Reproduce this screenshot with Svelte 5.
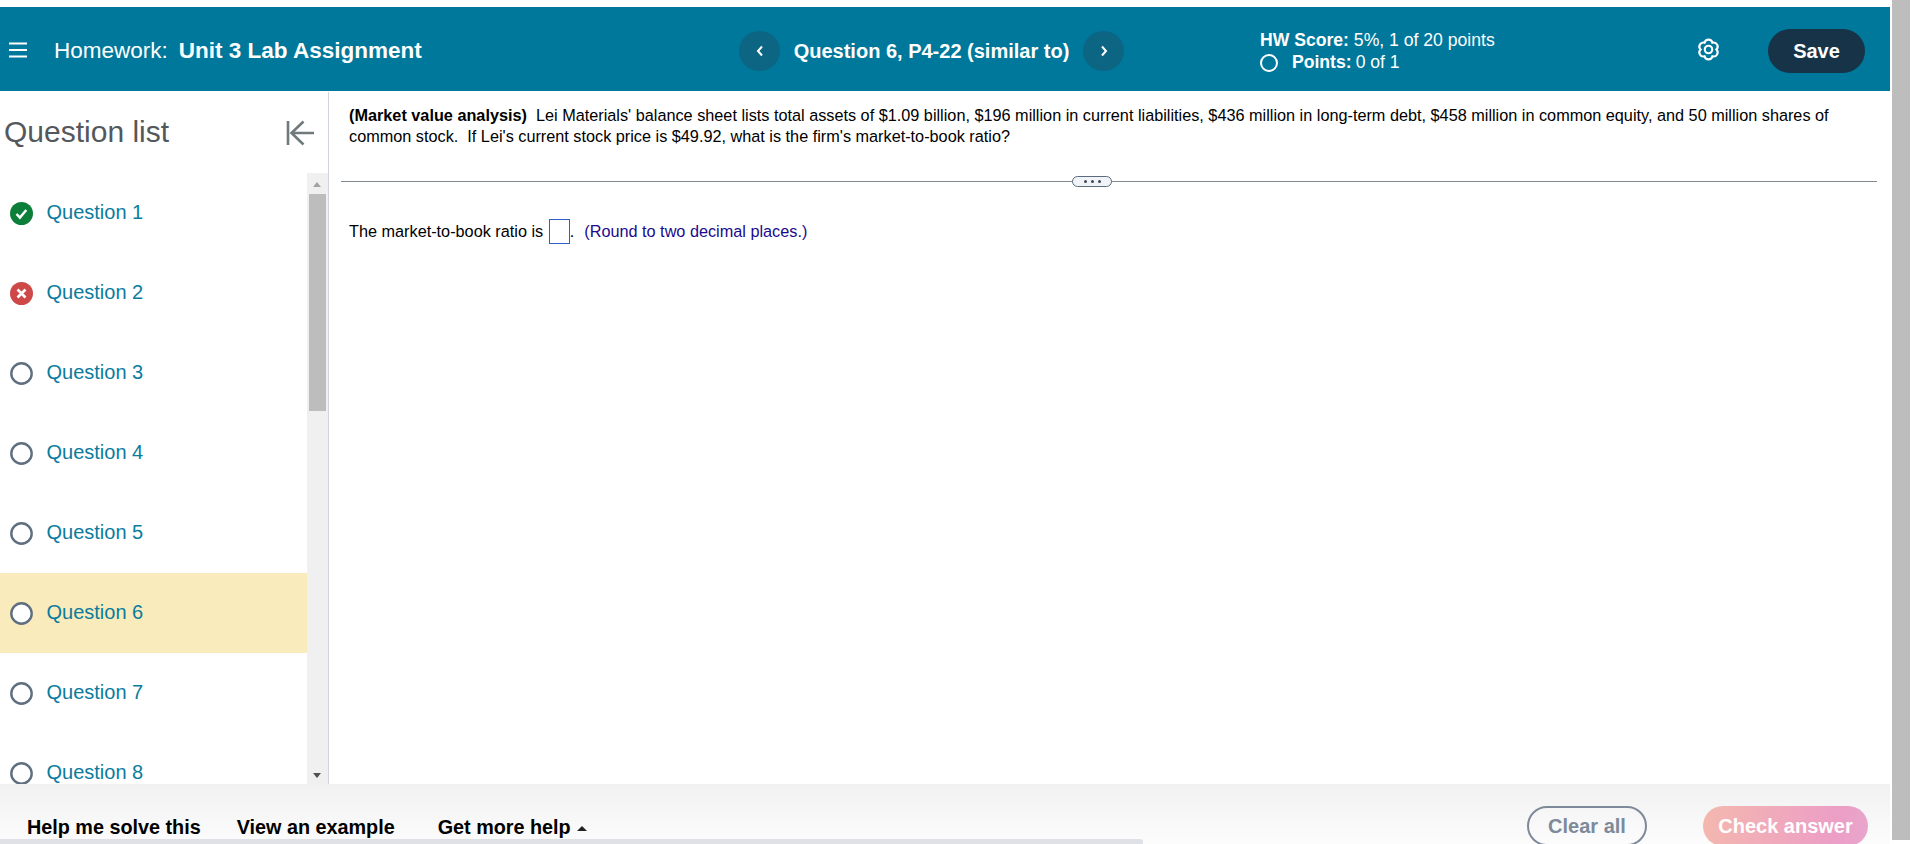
<script>
  const questions = [
    { n: 1, status: 'correct' },
    { n: 2, status: 'wrong' },
    { n: 3, status: 'open' },
    { n: 4, status: 'open' },
    { n: 5, status: 'open' },
    { n: 6, status: 'open', current: true },
    { n: 7, status: 'open' },
    { n: 8, status: 'open' }
  ];
</script>

<div class="page">
  <div class="main">
    <header class="topbar">
      <div class="title">
        <svg class="menu" width="18" height="16" viewBox="0 0 18 16">
          <path d="M0 1.5h18M0 8h18M0 14.5h18" stroke="#fff" stroke-width="2" />
        </svg>
        <span class="hw">Homework:</span>
        <strong>Unit 3 Lab Assignment</strong>
      </div>

      <nav class="qnav">
        <button class="round" aria-label="Previous question">
          <svg width="8" height="12" viewBox="0 0 8 12">
            <path d="M6 1.5 2 6l4 4.5" fill="none" stroke="#fff" stroke-width="2" />
          </svg>
        </button>
        <span class="qname">Question 6, P4-22 (similar to)</span>
        <button class="round" aria-label="Next question">
          <svg width="8" height="12" viewBox="0 0 8 12">
            <path d="M2 1.5 6 6l-4 4.5" fill="none" stroke="#fff" stroke-width="2" />
          </svg>
        </button>
      </nav>

      <div class="score">
        <div><b>HW Score:</b> 5%, 1 of 20 points</div>
        <div class="points"><span class="ring"></span><b>Points:</b> 0 of 1</div>
      </div>

      <svg class="gear" width="27" height="27" viewBox="0 0 24 24" fill="none" stroke="#fff" stroke-width="1.9">
        <circle cx="12" cy="12" r="3.3" />
        <path d="M8.5 5.94A3.6 3.6 0 0 1 15.5 5.94A3.6 3.6 0 0 1 19 12A3.6 3.6 0 0 1 15.5 18.06A3.6 3.6 0 0 1 8.5 18.06A3.6 3.6 0 0 1 5 12A3.6 3.6 0 0 1 8.5 5.94Z" />
      </svg>

      <button class="save">Save</button>
    </header>

    <div class="body">
      <aside class="sidebar">
        <div class="side-head">
          <h2>Question list</h2>
          <svg class="collapse" width="28" height="26" viewBox="0 0 28 26" fill="none" stroke="#6f7a7c" stroke-width="2.6">
            <path d="M2 1v24M28 13H6M17.5 1.5 5.5 13l12 11.5" />
          </svg>
        </div>
        <div class="side-scroll">
          <ul class="qlist">
            {#each questions as q}
              <li class:current={q.current}>
                {#if q.status === 'correct'}
                  <svg class="status" width="23" height="23" viewBox="0 0 23 23">
                    <circle cx="11.5" cy="11.5" r="11.5" fill="#0b7f3a" />
                    <path d="M6.5 12l3.4 3.6 6.4-7.6" fill="none" stroke="#fff" stroke-width="2.4" />
                  </svg>
                {:else if q.status === 'wrong'}
                  <svg class="status" width="23" height="23" viewBox="0 0 23 23">
                    <circle cx="11.5" cy="11.5" r="11.5" fill="#cf4848" />
                    <path d="M7.5 7.5l8 8M15.5 7.5l-8 8" fill="none" stroke="#fff" stroke-width="2.6" />
                  </svg>
                {:else}
                  <svg class="status" width="23" height="23" viewBox="0 0 23 23">
                    <circle cx="11.5" cy="11.5" r="10.2" fill="#fff" stroke="#5f6f7f" stroke-width="2.4" />
                  </svg>
                {/if}
                <a href="#q{q.n}">Question {q.n}</a>
              </li>
            {/each}
          </ul>
          <div class="scrollbar">
            <span class="arrow up"></span>
            <div class="thumb"></div>
            <span class="arrow down"></span>
          </div>
        </div>
      </aside>

      <section class="content">
        <p class="problem">
          <b>(Market value analysis)</b>&nbsp; Lei Materials' balance sheet lists total assets of $1.09 billion, $196 million in current liabilities, $436 million in long-term debt, $458 million in common equity, and 50 million shares of common stock.&nbsp; If Lei's current stock price is $49.92, what is the firm's market-to-book ratio?
        </p>
        <div class="divider"><span class="handle"><i></i><i></i><i></i></span></div>
        <p class="answer">
          The market-to-book ratio is <span class="blank"></span>.&nbsp; <span class="hint">(Round to two decimal places.)</span>
        </p>
      </section>
    </div>

    <footer class="footer">
      <div class="links">
        <a href="#help">Help me solve this</a>
        <a href="#example">View an example</a>
        <a class="more" href="#more">Get more help <span class="caret"></span></a>
      </div>
      <div class="actions">
        <button class="clear">Clear all</button>
        <button class="check">Check answer</button>
      </div>
      <div class="hbar"></div>
    </footer>
  </div>
  <div class="page-scroll"><div class="page-thumb"></div></div>
</div>

<style>
  :global(body) {
    margin: 0;
    overflow: hidden;
    background: #fff;
    font-family: "Liberation Sans", Arial, sans-serif;
  }

  .page {
    display: flex;
    height: 844px;
    overflow: hidden;
  }

  .main {
    flex: none;
    width: 1890px;
    display: flex;
    flex-direction: column;
    padding-top: 7px;
    box-sizing: border-box;
  }

  .topbar {
    flex: none;
    height: 84px;
    padding-top: 4px;
    background: #00789b;
    color: #fff;
    display: flex;
    align-items: center;
    box-sizing: border-box;
  }

  .title {
    width: 739px;
    display: flex;
    align-items: center;
    font-size: 22.5px;
    white-space: nowrap;
  }

  .menu {
    margin: -2px 27px 0 9px;
  }

  .hw {
    margin-right: 11px;
  }

  .qnav {
    width: 521px;
    display: flex;
    align-items: center;
  }

  .round {
    width: 41px;
    height: 40px;
    padding: 0;
    border: 0;
    border-radius: 50%;
    background: #0b6583;
    display: flex;
    align-items: center;
    justify-content: center;
  }

  .qname {
    width: 303px;
    text-align: center;
    font-size: 20px;
    font-weight: 700;
    white-space: nowrap;
  }

  .score {
    width: 434.5px;
    font-size: 17.6px;
    line-height: 22px;
  }

  .points {
    display: flex;
    align-items: center;
  }

  .ring {
    width: 14px;
    height: 14px;
    border: 2px solid #fff;
    border-radius: 50%;
    margin: 2px 14px 0 0;
  }

  .points b {
    margin-right: 4px;
  }

  .gear {
    flex: none;
    margin-bottom: 4px;
  }

  .save {
    flex: none;
    width: 97px;
    height: 44px;
    margin-left: 46.5px;
    border: 0;
    border-radius: 22px;
    background: #163347;
    color: #fff;
    font: 700 20px "Liberation Sans", Arial, sans-serif;
  }

  .body {
    flex: 1;
    min-height: 0;
    display: flex;
    margin-top: 1px;
  }

  .sidebar {
    flex: none;
    width: 328px;
    border-right: 1px solid #d3d3e0;
    display: flex;
    flex-direction: column;
  }

  .side-head {
    flex: none;
    height: 81px;
    display: flex;
    align-items: center;
    justify-content: space-between;
    padding: 0 14px 0 4px;
  }

  h2 {
    margin: -2px 0 0;
    font-size: 30px;
    font-weight: 400;
    color: #54585c;
  }

  .side-scroll {
    flex: 1;
    min-height: 0;
    display: flex;
  }

  .qlist {
    flex: 1;
    margin: 0;
    padding: 0;
    list-style: none;
    overflow: hidden;
  }

  .qlist li {
    height: 80px;
    display: flex;
    align-items: center;
    padding-left: 10px;
    box-sizing: border-box;
  }

  .qlist li.current {
    background: #f9ebbb;
  }

  .qlist a {
    margin: -2px 0 0 13.5px;
    font-size: 20px;
    color: #0a7c9e;
    text-decoration: none;
  }

  .status {
    flex: none;
  }

  .scrollbar {
    flex: none;
    width: 21px;
    background: #f0f0f0;
    display: flex;
    flex-direction: column;
    align-items: center;
    position: relative;
  }

  .thumb {
    position: absolute;
    top: 21px;
    left: 2px;
    width: 17px;
    height: 217px;
    background: #bdbdbd;
  }

  .arrow {
    position: absolute;
    left: 6px;
    width: 0;
    height: 0;
    border-left: 4.5px solid transparent;
    border-right: 4.5px solid transparent;
  }

  .arrow.up {
    top: 9px;
    border-bottom: 5px solid #a3a3a3;
  }

  .arrow.down {
    bottom: 6px;
    border-top: 5px solid #505050;
  }

  .content {
    flex: 1;
    min-width: 0;
    padding: 13px 13px 0 12px;
  }

  p {
    margin: 0;
    font-size: 16.26px;
    line-height: 21px;
    color: #000;
  }

  .problem {
    padding: 0 7px 0 8px;
  }

  .divider {
    height: 1px;
    background: #808890;
    margin: 34px 0 0;
    position: relative;
  }

  .handle {
    position: absolute;
    left: 731px;
    top: -5px;
    width: 40px;
    height: 11px;
    box-sizing: border-box;
    background: #f0f4f8;
    border: 1px solid #5c6c7c;
    border-radius: 6px;
    display: flex;
    align-items: center;
    justify-content: center;
    gap: 4px;
  }

  .handle i {
    width: 3px;
    height: 3px;
    border-radius: 50%;
    background: #404a54;
  }

  .answer {
    margin: 37px 0 0 8px;
    display: flex;
    align-items: center;
    white-space: pre;
  }

  .blank {
    width: 21px;
    height: 25px;
    box-sizing: border-box;
    border: 1px solid #2f5fc4;
    margin-left: 1px;
  }

  .hint {
    margin-left: 1px;
    color: #1a0a8c;
  }

  .footer {
    flex: none;
    height: 60px;
    display: flex;
    align-items: flex-start;
    justify-content: space-between;
    background: linear-gradient(#f1f1f1, #fcfcfc);
    overflow: hidden;
    position: relative;
  }

  .links {
    display: flex;
    padding: 32px 0 0 27px;
    font-size: 19.8px;
    font-weight: 700;
    gap: 36px;
  }

  .links a {
    color: #000;
    text-decoration: none;
    white-space: nowrap;
  }

  .links .more {
    margin-left: 7px;
  }

  .caret {
    display: inline-block;
    vertical-align: middle;
    margin-left: 1px;
    border-left: 5px solid transparent;
    border-right: 5px solid transparent;
    border-bottom: 5px solid #222;
  }

  .actions {
    display: flex;
    gap: 56px;
    padding: 22px 22px 0 0;
  }

  .actions button {
    height: 40px;
    border-radius: 20px;
    font: 700 20px "Liberation Sans", Arial, sans-serif;
    padding: 0;
  }

  .clear {
    width: 120px;
    border: 2px solid #7e8a9a;
    background: transparent;
    color: #7e8a9a;
  }

  .check {
    width: 165px;
    border: 0;
    background: linear-gradient(100deg, #f4b8ae, #ec9ec6 80%, #e8a6cc);
    color: #fff;
  }

  .hbar {
    position: absolute;
    left: 0;
    bottom: 0;
    width: 1143px;
    height: 5px;
    border-radius: 0 3px 0 0;
    background: #dfe1e6;
  }

  .page-scroll {
    flex: none;
    width: 21px;
    margin-left: 2px;
  }

  .page-thumb {
    width: 18px;
    height: 840px;
    background: #bdbdbd;
  }
</style>
